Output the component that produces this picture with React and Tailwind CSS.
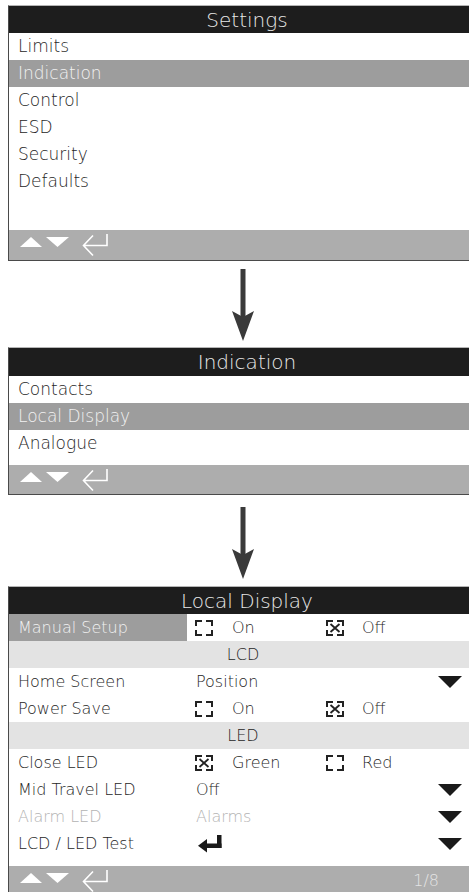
import React from "react";

const FONT = "font-['DejaVu_Sans',sans-serif]";

function Footer({ page, h = "h-[30px]" }) {
  return (
    <div className={`${h} bg-[#adadad] flex items-center justify-between`}>
      <svg width="110" height="30" viewBox="0 0 110 30" className="block">
        <polygon points="11,17 33,17 22,7" fill="#ffffff" />
        <polygon points="37,7 60,7 48.5,17" fill="#ffffff" />
        <path d="M98,4 V15.5 H74.5 M84,5.5 L74.5,15.5 L84,25.5" fill="none" stroke="#ffffff" strokeWidth="1.6" />
      </svg>
      {page && <span className="mr-[30px] text-[16px] text-[#e4e4e4] font-extralight">{page}</span>}
    </div>
  );
}

function Header({ title, h = "h-[27px]" }) {
  return (
    <div className={`${h} bg-[#1d1d1d] flex items-center justify-center pl-[16px] text-[20px] text-[#e8e8e8] font-extralight leading-none`}>
      {title}
    </div>
  );
}

function MenuRow({ children, active }) {
  return (
    <div
      className={`h-[27px] flex items-center pl-[9px] text-[17px] font-extralight leading-none ${
        active ? "bg-[#9d9d9d] text-[#f2f2f2]" : "text-[#262626]"
      }`}
    >
      {children}
    </div>
  );
}

function BigArrow({ mt }) {
  return (
    <div className={`${mt} ml-[228px] h-[72px]`}>
      <svg width="30" height="72" viewBox="0 0 30 72" className="block">
        <rect x="12.5" y="0" width="5" height="48" fill="#3a3a3a" />
        <path d="M4,42 L15,72 L26,42 L15,48 Z" fill="#3a3a3a" />
      </svg>
    </div>
  );
}

function Box({ checked }) {
  return (
    <svg width="18" height="16" viewBox="0 0 18 16" className="block">
      <path
        d="M1,6 V1 H7 M11,1 H17 V6 M1,10 V15 H7 M11,15 H17 V10"
        fill="none"
        stroke="#222"
        strokeWidth="2"
      />
      {checked && (
        <path d="M4.5,4 L13.5,12 M13.5,4 L4.5,12" stroke="#222" strokeWidth="1.8" />
      )}
    </svg>
  );
}

function DropTri() {
  return (
    <svg width="24" height="12" viewBox="0 0 24 12" className="block mr-[7px]">
      <polygon points="0,0 24,0 12,12" fill="#1a1a1a" />
    </svg>
  );
}

function Label({ children, active, dim }) {
  return (
    <div
      className={`w-[178px] h-full flex items-center pl-[9px] ${
        active ? "bg-[#9d9d9d] text-[#f2f2f2]" : dim ? "text-[#b3b3b3]" : "text-[#262626]"
      }`}
    >
      {children}
    </div>
  );
}

function CheckRow({ label, a, b, aChecked, active }) {
  return (
    <div className="h-[27px] flex items-center text-[16px] font-extralight leading-none">
      <Label active={active}>{label}</Label>
      <div className="flex items-center pl-[8px] text-[#262626]">
        <div className="w-[131px] flex items-center">
          <Box checked={aChecked} />
          <span className="ml-[19px]">{a}</span>
        </div>
        <div className="flex items-center">
          <Box checked={!aChecked} />
          <span className="ml-[18px]">{b}</span>
        </div>
      </div>
    </div>
  );
}

function DropRow({ label, value, dim, enter }) {
  return (
    <div className="h-[27px] flex items-center text-[16px] font-extralight leading-none">
      <Label dim={dim}>{label}</Label>
      <div className={`flex-1 flex items-center pl-[9px] ${dim ? "text-[#b3b3b3]" : "text-[#262626]"}`}>
        {enter ? (
          <svg width="24" height="18" viewBox="0 0 24 18" className="block ml-[2px]">
            <rect x="19" y="0" width="4.5" height="13" fill="#1a1a1a" />
            <rect x="8" y="8.5" width="15.5" height="4.5" fill="#1a1a1a" />
            <polygon points="0,10.75 9,4 9,17.5" fill="#1a1a1a" />
          </svg>
        ) : (
          value
        )}
      </div>
      <DropTri />
    </div>
  );
}

function Section({ children }) {
  return (
    <div className="h-[27px] bg-[#e3e3e3] flex items-center justify-center pl-[8px] text-[16px] text-[#262626] font-extralight leading-none">
      {children}
    </div>
  );
}

export default function App() {
  return (
    <div className={`w-[469px] h-[892px] bg-white overflow-hidden ${FONT}`}>
      <div className="pt-[5px]">
        {/* Panel 1 */}
        <div className="ml-[8px] w-[461px] border-t border-t-[#b5b5b5] border-l border-l-[#4a4a4a] border-b border-b-[#4a4a4a] bg-white">
          <Header title="Settings" />
          <MenuRow>Limits</MenuRow>
          <MenuRow active>Indication</MenuRow>
          <MenuRow>Control</MenuRow>
          <MenuRow>ESD</MenuRow>
          <MenuRow>Security</MenuRow>
          <MenuRow>Defaults</MenuRow>
          <div className="h-[35px]" />
          <Footer />
        </div>

        <BigArrow mt="mt-[8px]" />

        {/* Panel 2 */}
        <div className="mt-[6px] ml-[8px] w-[461px] border-t border-t-[#b5b5b5] border-l border-l-[#4a4a4a] border-b border-b-[#4a4a4a] bg-white">
          <Header title="Indication" h="h-[28px]" />
          <MenuRow>Contacts</MenuRow>
          <MenuRow active>Local Display</MenuRow>
          <MenuRow>Analogue</MenuRow>
          <div className="h-[8px]" />
          <Footer h="h-[29px]" />
        </div>

        <BigArrow mt="mt-[12px]" />

        {/* Panel 3 */}
        <div className="mt-[7px] ml-[8px] w-[461px] border-t border-t-[#b5b5b5] border-l border-l-[#4a4a4a] bg-white">
          <Header title="Local Display" />
          <CheckRow label="Manual Setup" a="On" b="Off" aChecked={false} active />
          <Section>LCD</Section>
          <DropRow label="Home Screen" value="Position" />
          <CheckRow label="Power Save" a="On" b="Off" aChecked={false} />
          <Section>LED</Section>
          <CheckRow label="Close LED" a="Green" b="Red" aChecked={true} />
          <DropRow label="Mid Travel LED" value="Off" />
          <DropRow label="Alarm LED" value="Alarms" dim />
          <DropRow label="LCD / LED Test" enter />
          <div className="h-[9px]" />
          <Footer page="1/8" />
        </div>
      </div>
    </div>
  );
}
